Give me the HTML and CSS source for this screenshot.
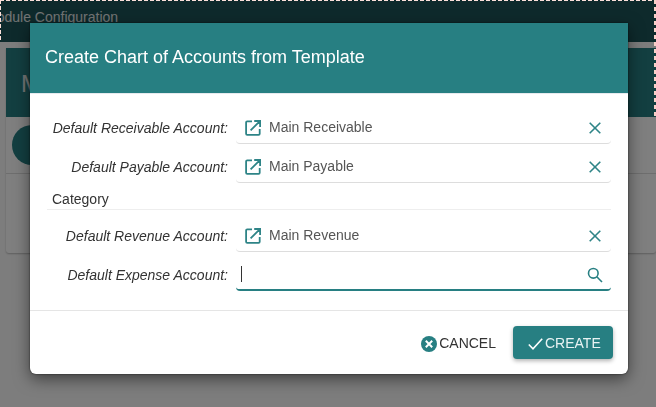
FILE: index.html
```html
<!DOCTYPE html>
<html lang="en">
<head>
<meta charset="utf-8">
<title>Create Chart of Accounts from Template</title>
<link rel="stylesheet" href="styles.css">
</head>
<body>
<div class="page">
  <div class="topbar"><span class="topbar-title">Module Configuration</span></div>
  <div class="card">
    <div class="card-head">Main</div>
    <div class="card-tools"><span class="round"></span></div>
    <div class="card-body"></div>
  </div>
</div>
<div class="backdrop"></div>
<div class="focus focus-top"></div>
<div class="focus focus-left"></div>
<div class="focus focus-right"></div>
<div class="dialog">
  <div class="dialog-head">Create Chart of Accounts from Template</div>
  <div class="dialog-body">
    <div class="row">
      <label class="label">Default Receivable Account:</label>
      <div class="field">
        <svg class="ico-link" viewBox="0 0 16 16"><path d="M7 1.3H2.2c-.6 0-1.1.5-1.1 1.1v11.4c0 .6.5 1.1 1.1 1.1h11.4c.6 0 1.1-.5 1.1-1.1V9M5.6 10.4 14.4 1.6M9.2 1h5.9v5.9" /></svg>
        <span class="value">Main Receivable</span>
        <svg class="ico-x" viewBox="0 0 12 12"><path d="M.7.7l10.6 10.6M11.3.7.7 11.3"/></svg>
      </div>
    </div>
    <div class="row">
      <label class="label">Default Payable Account:</label>
      <div class="field">
        <svg class="ico-link" viewBox="0 0 16 16"><path d="M7 1.3H2.2c-.6 0-1.1.5-1.1 1.1v11.4c0 .6.5 1.1 1.1 1.1h11.4c.6 0 1.1-.5 1.1-1.1V9M5.6 10.4 14.4 1.6M9.2 1h5.9v5.9" /></svg>
        <span class="value">Main Payable</span>
        <svg class="ico-x" viewBox="0 0 12 12"><path d="M.7.7l10.6 10.6M11.3.7.7 11.3"/></svg>
      </div>
    </div>
    <div class="section">Category</div>
    <div class="row">
      <label class="label">Default Revenue Account:</label>
      <div class="field">
        <svg class="ico-link" viewBox="0 0 16 16"><path d="M7 1.3H2.2c-.6 0-1.1.5-1.1 1.1v11.4c0 .6.5 1.1 1.1 1.1h11.4c.6 0 1.1-.5 1.1-1.1V9M5.6 10.4 14.4 1.6M9.2 1h5.9v5.9" /></svg>
        <span class="value">Main Revenue</span>
        <svg class="ico-x" viewBox="0 0 12 12"><path d="M.7.7l10.6 10.6M11.3.7.7 11.3"/></svg>
      </div>
    </div>
    <div class="row">
      <label class="label">Default Expense Account:</label>
      <div class="field field-active">
        <span class="caret"></span>
        <svg class="ico-search" viewBox="0 0 16 16"><circle cx="6.3" cy="6.3" r="4.8"/><path d="M9.8 9.8 15 15"/></svg>
      </div>
    </div>
  </div>
  <div class="dialog-foot">
    <button class="btn btn-plain" type="button">
      <svg class="ico-cancel" viewBox="0 0 16 16"><circle class="disc" cx="8" cy="8" r="8"/><path class="cross" d="M4.8 4.8l6.4 6.4M11.2 4.8l-6.4 6.4"/></svg>CANCEL
    </button>
    <button class="btn btn-primary" type="button">
      <svg class="ico-check" viewBox="0 0 15 12"><path d="M.8 6.5 5 10.8 14.2.8"/></svg>CREATE
    </button>
  </div>
</div>
</body>
</html>
```
FILE: styles.css
```css
* { box-sizing: border-box; }
html, body { margin: 0; height: 100%; overflow: hidden; }
body { background: #fff; font-family: "Liberation Sans", sans-serif; font-size: 14px; color: #333; }

.page { height: 407px; background: #fbfbfb; }
.topbar {
  height: 42px;
  padding-top: 9px;
  background: #1c5458;
  overflow: hidden;
  white-space: nowrap;
  color: #e4e9e9;
  line-height: 16px;
}
.topbar-title { display: block; margin-left: -15px; }
.card {
  margin: 6px 0 0 6px;
  height: 205px;
  background: #fff;
  border-radius: 0 0 3px 3px;
  box-shadow: 0 1px 2px rgba(0,0,0,.25);
}
.card-head {
  height: 69px;
  padding: 22px 15px;
  background: #277f82;
  color: #e4e9e9;
  font-size: 24px;
  line-height: 28px;
  overflow: hidden;
}
.card-tools { height: 57px; padding: 8px 6px; border-bottom: 1px solid #ddd; }
.round { display: block; width: 40px; height: 40px; border-radius: 50%; background: #277f82; }

.backdrop { position: fixed; inset: 0; background: rgba(0,0,0,.5); }

.focus { position: absolute; top: 0; }
.focus-top {
  left: 0; right: 0; height: 1px;
  background: repeating-linear-gradient(90deg, #fbe0da 0 4px, transparent 4px 6px);
}
.focus-left {
  left: 0; width: 1px; height: 42px;
  background: repeating-linear-gradient(180deg, #fbe0da 0 4px, transparent 4px 6px);
}
.focus-right {
  right: 0; width: 2px; height: 118px;
  background: repeating-linear-gradient(180deg, #f8d0c8 0 4px, transparent 4px 7px);
}

.dialog {
  position: absolute;
  left: 30px;
  top: 23px;
  width: 598px;
  height: 351px;
  background: #fff;
  border-radius: 0 0 6px 6px;
  box-shadow: 0 5px 16px rgba(0,0,0,.5), 0 0 2px rgba(0,0,0,.7);
  display: flex;
  flex-direction: column;
}
.dialog-head {
  height: 71px;
  padding: 0 15px 1px;
  display: flex;
  align-items: center;
  background: #277f82;
  border-bottom: 1px solid #e6eaee;
  color: #fff;
  font-size: 18px;
}
.dialog-body { flex: 1; padding: 11px 17px 0; border-bottom: 1px solid #e5e5e5; }
.row { display: flex; height: 39px; column-gap: 8px; }
.label {
  width: 181px;
  padding: 15px 0 0 5px;
  text-align: right;
  font-style: italic;
  font-size: 14px;
  line-height: 16px;
  color: #333;
}
.field {
  flex: 1;
  height: 39px;
  display: flex;
  align-items: center;
  padding: 7px 9px 0 9px;
  border-bottom: 1px solid #ddd;
  border-radius: 0 0 4px 4px;
}
.value { flex: 1; margin-left: 8px; color: #555; font-size: 14px; line-height: 16px; position: relative; top: -1px; }
.ico-link { width: 16px; height: 16px; fill: none; stroke: #2e8487; stroke-width: 1.8; }
.ico-x { width: 12px; height: 12px; margin-right: 1px; fill: none; stroke: #2e8487; stroke-width: 1.6; }
.field-active { border-bottom: 2px solid #277f82; padding: 8px 8px 0 5px; }
.caret { width: 1px; height: 16px; margin-top: -1px; background: #333; margin-right: auto; }
.ico-search { width: 16px; height: 16px; fill: none; stroke: #277f82; stroke-width: 1.6; }
.section {
  height: 27px;
  padding: 8px 5px 0;
  border-bottom: 1px solid #eee;
  line-height: 16px;
  color: #333;
  margin-bottom: 3px;
}
.dialog-foot {
  height: 63px;
  flex: none;
  display: flex;
  align-items: flex-start;
  justify-content: flex-end;
  gap: 17px;
  padding: 15px 15px 0 0;
}
.btn {
  height: 33px;
  display: flex;
  align-items: center;
  border: 0;
  border-radius: 4px;
  font-family: "Liberation Sans", sans-serif;
  font-size: 14px;
}
.btn-plain { background: none; color: #333; padding: 0; gap: 2px; }
.ico-cancel { width: 16px; height: 16px; margin-top: 2px; }
.disc { fill: #277f82; }
.cross { fill: none; stroke: #fff; stroke-width: 2; }
.btn-primary {
  width: 100px;
  padding: 0 0 0 15px;
  gap: 2px;
  background: #277f82;
  color: #e8f3f3;
  box-shadow: 0 2px 4px rgba(0,0,0,.3);
}
.ico-check { width: 15px; height: 12px; margin-top: 3px; fill: none; stroke: #fff; stroke-width: 1.6; }
```
